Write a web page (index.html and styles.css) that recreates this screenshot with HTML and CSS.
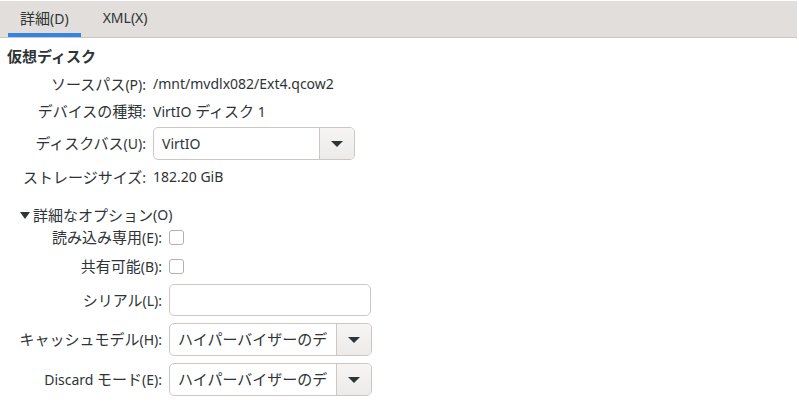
FILE: index.html
```html
<!DOCTYPE html>
<html lang="ja">
<head>
<meta charset="utf-8">
<link rel="stylesheet" href="styles.css">
</head>
<body>
<div class="window">
  <div class="tabs">
    <div class="tab active"><span class="j">詳細</span>(D)</div>
    <div class="tab">XML(X)</div>
  </div>
  <div class="content">
    <div class="heading"><span class="j">仮想ディスク</span></div>
    <div class="grid main">
      <div class="label"><span class="j">ソースパス</span>(P):</div>
      <div class="value">/mnt/mvdlx082/Ext4.qcow2</div>
      <div class="label"><span class="j">デバイスの種類</span>:</div>
      <div class="value">VirtIO <span class="j">ディスク</span> 1</div>
      <div class="label"><span class="j">ディスクバス</span>(U):</div>
      <div class="combo w202"><span class="combo-text">VirtIO</span><span class="combo-btn"><span class="arrow"></span></span></div>
      <div class="label"><span class="j">ストレージサイズ</span>:</div>
      <div class="value">182.20 GiB</div>
    </div>
    <div class="expander"><span class="exp-arrow"></span><span class="j">詳細なオプション</span>(O)</div>
    <div class="grid adv">
      <div class="label"><span class="j">読み込み専用</span>(E):</div>
      <div class="cbcell"><span class="check"></span></div>
      <div class="label"><span class="j">共有可能</span>(B):</div>
      <div class="cbcell"><span class="check"></span></div>
      <div class="label"><span class="j">シリアル</span>(L):</div>
      <div class="entry"></div>
      <div class="label"><span class="j">キャッシュモデル</span>(H):</div>
      <div class="combo w203"><span class="combo-text"><span class="j">ハイパーバイザーのデ</span></span><span class="combo-btn"><span class="arrow"></span></span></div>
      <div class="label">Discard <span class="j">モード</span>(E):</div>
      <div class="combo w203"><span class="combo-text"><span class="j">ハイパーバイザーのデ</span></span><span class="combo-btn"><span class="arrow"></span></span></div>
    </div>
  </div>
</div>
</body>
</html>
```

FILE: styles.css
```css
* { box-sizing: border-box; }
html, body { margin: 0; padding: 0; background: #ffffff; }
body {
  font-family: "Noto Sans", "Noto Sans CJK JP", sans-serif;
  font-size: 14px;
  line-height: 20px;
  color: #2e3436;
}
.j { font-size: 15px; }
.window { width: 797px; padding-top: 1px; }
.tabs {
  display: flex;
  gap: 10px;
  height: 37px;
  padding-left: 8px;
  background: #e1dedb;
  border-bottom: 1px solid #cdc7c2;
}
.tab {
  padding: 0 12px;
  line-height: 34px;
  height: 36px;
  color: #2e3436;
  border-bottom: 4px solid transparent;
}
.tab.active { border-bottom-color: #3584e4; }
.content { padding: 8px 0 0 7px; }
.heading { font-weight: bold; height: 20px; }
.grid {
  display: grid;
  align-items: center;
  column-gap: 7px;
}
.main {
  grid-template-columns: 139px auto;
  grid-template-rows: 22px 20px 33px 22px;
  row-gap: 6px;
  margin-top: 7px;
  justify-content: start;
}
.label { text-align: right; white-space: nowrap; }
.value { white-space: nowrap; }
.combo {
  display: flex;
  height: 33px;
  border: 1px solid #cdc7c2;
  border-radius: 5px;
  background: #ffffff;
  overflow: hidden;
}
.w202 { width: 202px; }
.w203 { width: 203px; }
.combo-text {
  flex: 1;
  padding-left: 8px;
  line-height: 31px;
  white-space: nowrap;
  overflow: hidden;
}
.combo-btn {
  width: 35px;
  border-left: 1px solid #cdc7c2;
  background: linear-gradient(#f6f5f4, #edebe9);
  display: flex;
  align-items: center;
  justify-content: center;
}
.arrow {
  width: 0; height: 0;
  border-left: 6px solid transparent;
  border-right: 6px solid transparent;
  border-top: 6px solid #2e3436;
}
.expander {
  margin-top: 16px;
  margin-left: 13px;
  height: 22px;
  display: flex;
  align-items: center;
}
.exp-arrow {
  width: 0; height: 0;
  border-left: 5px solid transparent;
  border-right: 5px solid transparent;
  border-top: 7px solid #2e3436;
  margin-right: 3px;
}
.adv {
  grid-template-columns: 155px auto;
  grid-template-rows: 22px 22px 32px 33px 33px;
  row-gap: 7px;
  margin-top: 0px;
  justify-content: start;
}
.cbcell { display: flex; align-items: center; }
.check {
  width: 15px; height: 15px;
  border: 1px solid #b6b0aa;
  border-radius: 3px;
  background: #ffffff;
}
.entry {
  width: 202px;
  height: 32px;
  border: 1px solid #cdc7c2;
  border-radius: 5px;
  background: #ffffff;
}
```
